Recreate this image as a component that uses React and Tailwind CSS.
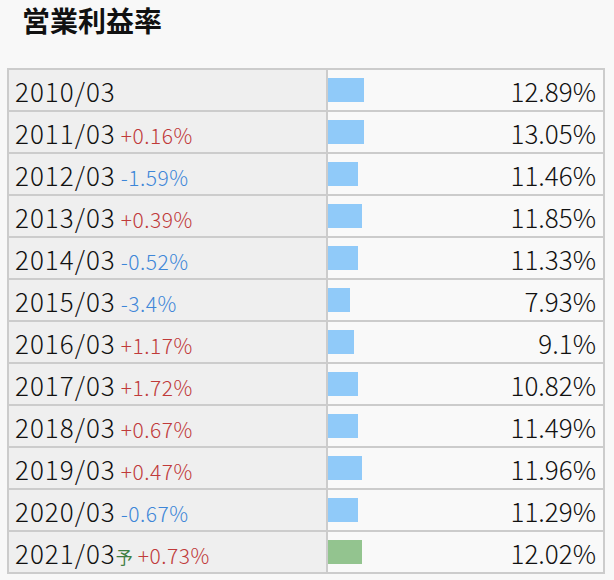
const rows = [
  { year: "2010/03", diff: null, value: "12.89%", bar: 36 },
  { year: "2011/03", diff: "+0.16%", value: "13.05%", bar: 36 },
  { year: "2012/03", diff: "-1.59%", value: "11.46%", bar: 30 },
  { year: "2013/03", diff: "+0.39%", value: "11.85%", bar: 34 },
  { year: "2014/03", diff: "-0.52%", value: "11.33%", bar: 30 },
  { year: "2015/03", diff: "-3.4%", value: "7.93%", bar: 22 },
  { year: "2016/03", diff: "+1.17%", value: "9.1%", bar: 26 },
  { year: "2017/03", diff: "+1.72%", value: "10.82%", bar: 30 },
  { year: "2018/03", diff: "+0.67%", value: "11.49%", bar: 30 },
  { year: "2019/03", diff: "+0.47%", value: "11.96%", bar: 34 },
  { year: "2020/03", diff: "-0.67%", value: "11.29%", bar: 30 },
  { year: "2021/03", diff: "+0.73%", value: "12.02%", bar: 34, forecast: true },
];

export default function App() {
  return (
    <div
      className="w-[614px] h-[580px] bg-[#f8f8f8] overflow-hidden text-[#111]"
      style={{ fontFamily: '"Noto Sans CJK JP", "Noto Sans", sans-serif' }}
    >
      <h1 className="pl-[22px] pt-[1px] h-[68px] text-[28px] font-bold leading-[38px]">営業利益率</h1>

      <div className="ml-[7px] w-[598px] border-2 border-[#cccccc]">
        {rows.map((r, i) => (
          <div
            key={r.year}
            className={`flex ${i < rows.length - 1 ? "h-[42px] border-b-2 border-[#cccccc]" : "h-[40px]"}`}
          >
            {/* year + change */}
            <div className="w-[319px] shrink-0 bg-[#efefef] border-r-2 border-[#cccccc] flex items-center pl-[6px] whitespace-nowrap">
              <div className="flex items-baseline">
                <span className="text-[26px] font-light tracking-[1px]">{r.year}</span>
                {r.forecast && <span className="text-[17px] text-[#3f7f42]">予</span>}
                {r.diff && (
                  <span
                    className={`text-[21px] font-light tracking-[0.5px] ml-[5px] ${r.diff.startsWith("+") ? "text-[#c03a3a]" : "text-[#3d86d8]"}`}
                  >
                    {r.diff}
                  </span>
                )}
              </div>
            </div>

            {/* bar + value */}
            <div className="flex-1 bg-[#f9f9f9] flex items-center pr-[7px]">
              <div
                className={`h-[24px] ${r.forecast ? "bg-[#93c48f]" : "bg-[#90caf9]"}`}
                style={{ width: r.bar }}
              />
              <span className="ml-auto text-[26px] font-light">{r.value}</span>
            </div>
          </div>
        ))}
      </div>
    </div>
  );
}
